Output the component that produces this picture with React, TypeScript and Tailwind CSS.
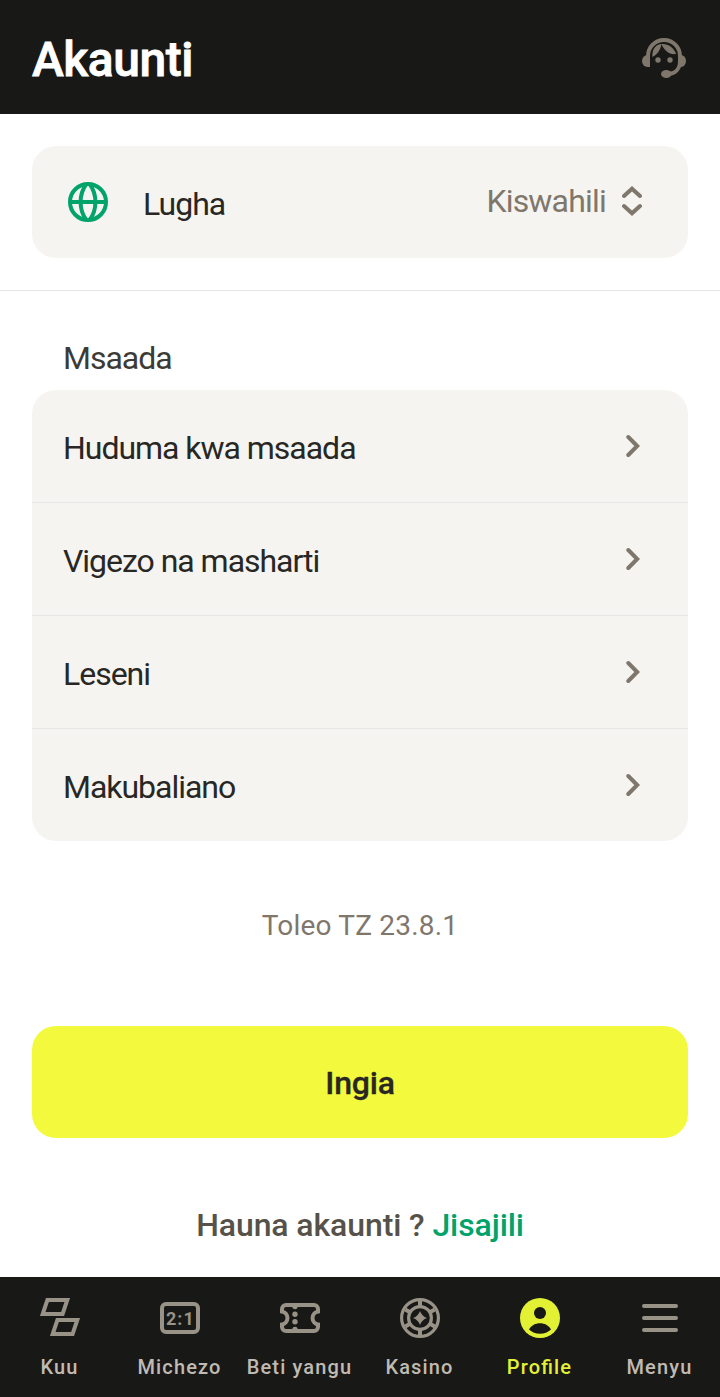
import type { ReactNode } from "react";
import clsx from "clsx";

const HELP_LINKS = ["Huduma kwa msaada", "Vigezo na masharti", "Leseni", "Makubaliano"];

function SupportIcon() {
  return (
    <svg width="44" height="40" viewBox="0 0 44 40" fill="#7f776c">
      <path d="M6 20v-2a16 16 0 0 1 32 0v5c0 7.500-4.500 13-13 13" fill="none" stroke="#7f776c" strokeWidth="4" />
      <path d="M8 17v12H5.500A5.500 6 0 0 1 5.500 17Z" />
      <path d="M38 17h1a5 6 0 0 1 0 12h-2Z" />
      <ellipse cx="24.300" cy="36" rx="5.300" ry="4" />
      <path d="M19.500 6C14 6 10 11 10.300 19C15 17 18.500 12 19.500 6Z" />
      <path d="M19.500 6C26 5.500 32 9.500 34 16C27.500 17 22 12.500 19.500 6Z" />
      <circle cx="16" cy="22" r="2.700" />
      <circle cx="28" cy="22" r="2.700" />
    </svg>
  );
}

function GlobeIcon() {
  return (
    <svg width="40" height="40" viewBox="0 0 40 40" fill="none" stroke="#00a369" strokeWidth="4">
      <circle cx="20" cy="20" r="18" />
      <path d="M2 20h36M18 2.500c-7.200 10-7.200 25 0 35M22 2.500c7.200 10 7.200 25 0 35" />
    </svg>
  );
}

function SelectIcon() {
  return (
    <svg width="20" height="30" viewBox="0 0 20 30" fill="none" stroke="#7f776c" strokeWidth="4" strokeLinecap="round">
      <path d="M2 10l8-7.300 8 7.300M2 20l8 7.300 8-7.300" />
    </svg>
  );
}

function ChevronIcon() {
  return (
    <svg width="14" height="24" viewBox="0 0 14 24" fill="none" stroke="#7f776c" strokeWidth="4" strokeLinecap="round">
      <path d="M2.300 3L11.200 12L2.300 21" />
    </svg>
  );
}

const NAV: { label: string; active?: boolean; icon: ReactNode }[] = [
  {
    label: "Kuu",
    icon: (
      <g fill="none" stroke="currentColor" strokeWidth="4">
        <path d="M7.400 2h19.900l-4.700 14H2.700Z" />
        <path d="M17.400 22h19.900l-4.700 14H12.700Z" />
      </g>
    ),
  },
  {
    label: "Michezo",
    icon: (
      <g>
        <rect x="2" y="6" width="36" height="28" rx="4" fill="none" stroke="currentColor" strokeWidth="4" />
        <text x="6 17.300 23.600" y="26.700" fill="currentColor" className="font-[Roboto] text-[18px] font-bold">
          2:1
        </text>
      </g>
    ),
  },
  {
    label: "Beti yangu",
    icon: (
      <g>
        <path
          d="M6 7h28a4 4 0 0 1 4 4v2.500a6.600 6.600 0 0 0 0 13V29a4 4 0 0 1-4 4H6a4 4 0 0 1-4-4v-2.500a6.600 6.600 0 0 0 0-13V11a4 4 0 0 1 4-4Z"
          fill="none"
          stroke="currentColor"
          strokeWidth="4"
        />
        <g fill="currentColor">
          <circle cx="15" cy="8.500" r="2.700" />
          <circle cx="15" cy="16.300" r="2.700" />
          <circle cx="15" cy="23.800" r="2.700" />
          <circle cx="15" cy="31.500" r="2.700" />
        </g>
      </g>
    ),
  },
  {
    label: "Kasino",
    icon: (
      <g fill="none" stroke="currentColor" strokeWidth="3.200">
        <circle cx="20" cy="20" r="18.400" />
        <circle cx="20" cy="20" r="11.400" />
        <path
          d="M20 3v6M20 31v6M5.300 11.500l5.200 3M29.500 25.500l5.200 3M5.300 28.500l5.200-3M29.500 14.500l5.200-3"
          strokeWidth="4"
        />
        <path d="M20 13q1.800 5.200 7 7q-5.200 1.800-7 7q-1.800-5.200-7-7q5.200-1.800 7-7Z" fill="currentColor" stroke="none" />
      </g>
    ),
  },
  {
    label: "Profile",
    active: true,
    icon: (
      <g>
        <circle cx="20" cy="20" r="20" fill="currentColor" />
        <circle cx="20" cy="15" r="6" fill="#181816" />
        <path d="M9 31.500C13.500 23.300 26.500 23.300 31 31.500C25.500 37.200 14.500 37.200 9 31.500Z" fill="#181816" />
      </g>
    ),
  },
  {
    label: "Menyu",
    icon: (
      <path d="M4 8h32M4 20h32M4 32h32" stroke="currentColor" strokeWidth="4" strokeLinecap="round" />
    ),
  },
];

function BottomNav() {
  return (
    <nav className="grid h-[120px] grid-cols-6 bg-[#181816]">
      {NAV.map((item) => (
        <a
          key={item.label}
          className={clsx(
            "flex flex-col items-center pt-[21px]",
            item.active ? "text-[#e2f134]" : "text-[#989287]"
          )}
        >
          <svg width="40" height="40" viewBox="0 0 40 40">
            {item.icon}
          </svg>
          <span
            className={clsx(
              "mt-[17px] mr-px text-xl leading-6 font-medium tracking-[1.150px] whitespace-nowrap [font-feature-settings:'liga']",
              !item.active && "text-[#c0bbb2]"
            )}
          >
            {item.label}
          </span>
        </a>
      ))}
    </nav>
  );
}

export default function App() {
  return (
    <div className="flex h-[1397px] w-[720px] flex-col bg-white font-[Roboto,sans-serif] text-[#282724]">
      <header className="flex h-[114px] items-center justify-between bg-[#181816] pt-[2px] pr-[34px] pl-8">
        <h1 className="pt-1 text-5xl font-medium tracking-[-0.5px] text-white [-webkit-text-stroke:0.8px_white]">
          Akaunti
        </h1>
        <SupportIcon />
      </header>

      <main className="flex flex-1 flex-col">
        <div className="border-b border-[#e6e6e6] px-8 pt-8 pb-8">
          <div className="flex h-28 items-center rounded-3xl bg-[#f5f4f0] pr-[46px] pl-9">
            <GlobeIcon />
            <span className="mt-1 ml-[35px] text-[32px] tracking-[-1px]">Lugha</span>
            <span className="mb-[2px] ml-auto text-[32px] tracking-[-0.8px] text-[#7f776c]">Kiswahili</span>
            <span className="mb-[2px] ml-4">
              <SelectIcon />
            </span>
          </div>
        </div>

        <section className="px-8 pt-[43px]">
          <h2 className="pl-[31px] text-[32px] leading-[48px] tracking-[-1px] text-[#3d3b36]">Msaada</h2>
          <ul className="mt-2 divide-y divide-[#e6e6e6] overflow-hidden rounded-3xl bg-[#f5f4f0]">
            {HELP_LINKS.map((label) => (
              <li key={label} className="flex h-[113px] items-center justify-between pr-12 pl-[31px] last:h-28">
                <span className="mt-1 text-[32px] tracking-[-1.030px]">{label}</span>
                <ChevronIcon />
              </li>
            ))}
          </ul>
        </section>

        <p className="mt-[64px] text-center text-[28px] leading-[42px] tracking-[0.2px] text-[#7f776c]">
          Toleo TZ 23.8.1
        </p>

        <button className="mx-8 mt-[79px] h-28 rounded-3xl bg-[#f3fa3e] pt-[2px] text-[32px] font-medium tracking-[-0.2px] [-webkit-text-stroke:0.3px_#282724]">
          Ingia
        </button>

        <p className="mt-[63px] text-center text-[32px] leading-[48px] font-medium tracking-[-0.1px] text-[#575249]">
          Hauna akaunti ? <a className="text-[#00a369]">Jisajili</a>
        </p>
      </main>

      <BottomNav />
    </div>
  );
}
